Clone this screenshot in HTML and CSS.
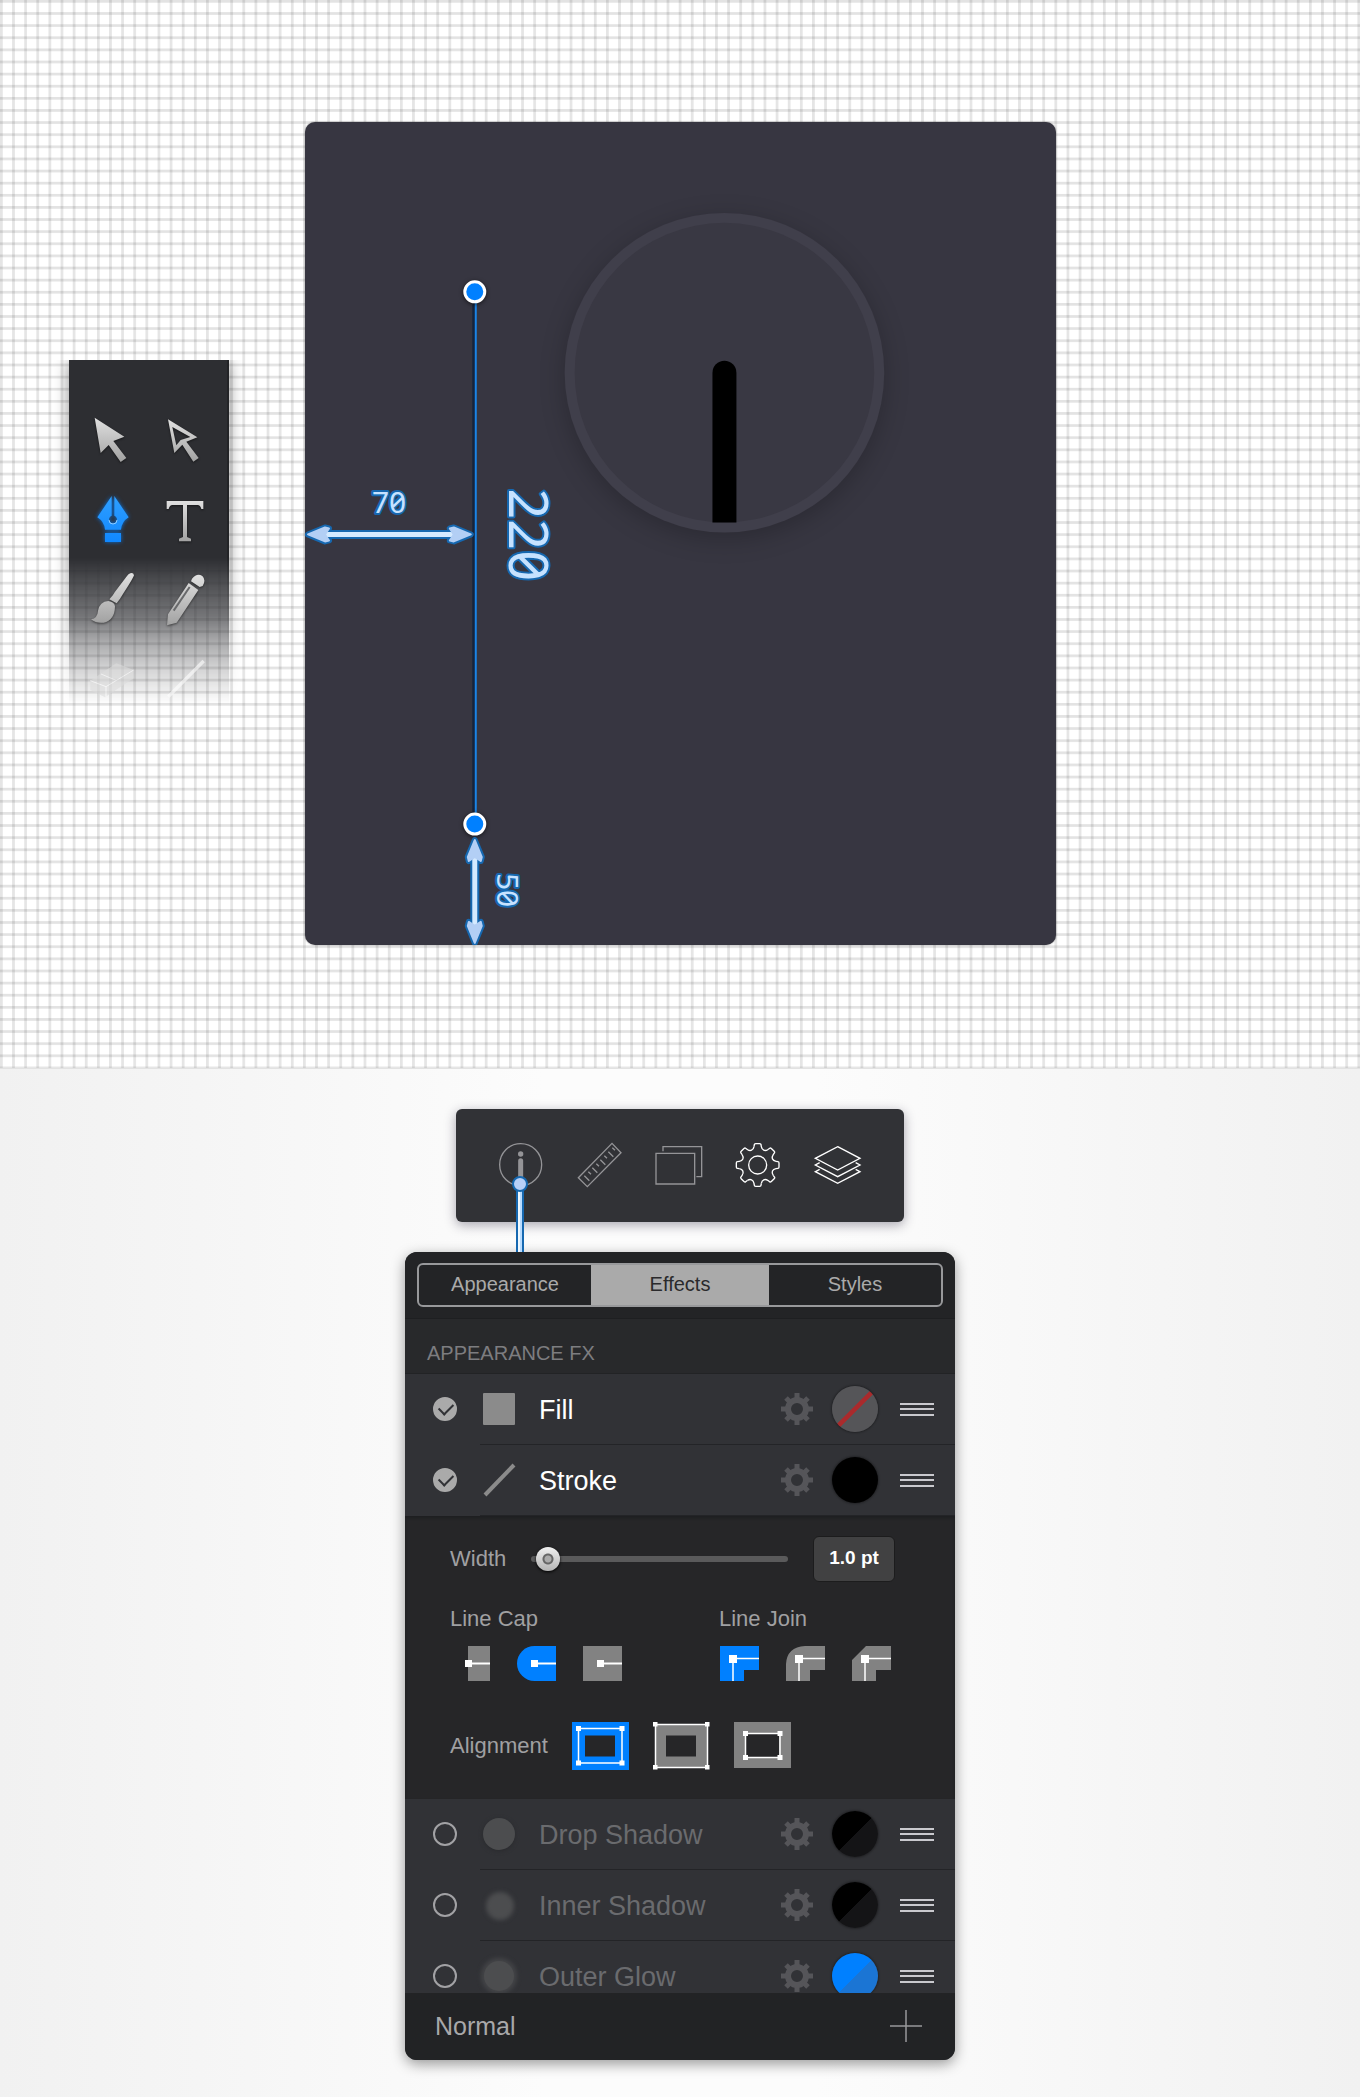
FILE: index.html
```
<!DOCTYPE html>
<html lang="en">
<head>
<meta charset="utf-8">
<meta name="viewport" content="width=device-width, initial-scale=1">
<title>Stroke effects</title>
<link rel="stylesheet" href="styles.css">
</head>
<body>
<svg class="defs" aria-hidden="true">
  <defs>
    <linearGradient id="metal" x1="0" y1="0" x2="0" y2="1"><stop offset="0" stop-color="#e0e0e0"/><stop offset="1" stop-color="#a2a2a2"/></linearGradient>
    <linearGradient id="azure" x1="0" y1="0" x2="0" y2="1"><stop offset="0" stop-color="#2f9fff"/><stop offset="1" stop-color="#1088ff"/></linearGradient>
    <symbol id="gear" viewBox="0 0 34 34">
      <g fill="none" stroke="currentColor"><circle cx="17" cy="17" r="9" stroke-width="6"/>
      <path stroke-width="5" d="M17 1v6M17 33v-6M1 17h6M33 17h-6M28 6l-5 5M6 6l5 5M28 28l-5-5M6 28l5-5"/></g>
    </symbol>
    <path id="tooth" d="M-11-55L-10-61Q-10-64-6-64H6Q10-64 10-61L11-55C13-44 21.900-40.300 31.100-46.700"/>
    <g id="arrowhead"><path d="M0 0L17-7L21-6L17 0L21 6L17 7Z"/></g>
  </defs>
</svg>

<section class="stage">
  <svg class="stage-grid" aria-hidden="true">
    <defs><pattern id="cells" width="12.12" height="12.12" patternUnits="userSpaceOnUse">
      <path d="M0 0h12.120v2.700H0z" fill="#000" fill-opacity=".11"/><path d="M0 0h2.700v12.120H0z" fill="#000" fill-opacity=".1"/>
    </pattern></defs>
    <rect width="100%" height="100%" fill="url(#cells)"/>
  </svg>

  <div class="toolbox" role="toolbar" aria-label="Tools">
    <button class="tool" aria-label="Move"><svg viewBox="75 180 219 240" fill="url(#metal)"><path d="M131 233L220 290L187 303L226 354L209 366L173 315L149 339Z"/></svg></button>
    <button class="tool" aria-label="Node"><svg viewBox="294 180 219 240" fill="url(#metal)"><path fill-rule="evenodd" d="M351 238L439 292L406 305L443 354L427 365L394 314L370 339ZM364 261L376 316L389 300L418 291Z"/></svg></button>
    <button class="tool tool-active" aria-label="Pen"><svg viewBox="75 420 219 240" fill="url(#azure)"><path d="M182 468V527A12 12 0 1 0 190 527V468L233 532Q212 545 210 569H162Q160 545 139 532ZM162 579H210V606H162Z"/><path d="M174 540A12 12 0 0 0 198 540" fill="none" stroke="#8ccbff" stroke-width="3"/></svg></button>
    <button class="tool" aria-label="Text"><svg viewBox="294 420 219 240" fill="url(#metal)"><path d="M347 483H457V507H451Q448 495 440 495H408V591L420 596V604H384V596L396 591V495H364Q356 495 353 507H347Z"/></svg></button>
    <button class="tool" aria-label="Brush"><svg viewBox="75 660 219 240" fill="url(#metal)"><path d="M238 700Q247 697 249 706Q248 713 207 776L197 790L175 778Q188 764 191 757L228 708Q232 702 238 700ZM172 783Q190 786 192 799Q191 842 158 848Q136 851 120 838Q140 834 141 812Q146 785 172 783Z"/></svg></button>
    <button class="tool" aria-label="Pencil"><svg viewBox="294 660 219 240" fill="url(#metal)"><path d="M423 716Q438 698 454 708Q466 720 455 738L446 741L420 724ZM413 729L442 750L377 848L348 856L351 823Z"/><path d="M416 741L368 812" stroke="#68696b" stroke-width="6"/></svg></button>
    <button class="tool tool-faded" aria-label="Eraser"><svg viewBox="75 900 219 240"><path d="M118 1022L196 970L248 990V1015L162 1072L118 1050Z" fill="#ddd"/><path d="M118 1022L165 1040L248 990M165 1040V1070M150 1002L195 1021" fill="none" stroke="#fff" stroke-width="3"/></svg></button>
    <button class="tool tool-faded" aria-label="Line"><svg viewBox="294 900 219 240"><path d="M458 963L352 1070" stroke="#fff" stroke-width="10"/></svg></button>
  </div>

  <div class="artboard">
    <svg class="drawing" viewBox="304 122 752 824" role="img" aria-label="Dial with a 220 point guide line">
      <g class="dial"><circle cx="724" cy="373" r="160" fill="#403f4b"/></g>
      <circle cx="724" cy="373" r="150" fill="#393843"/>
      <path d="M712 523V373a12 12 0 0 1 24 0V523Z" fill="#000"/>
      <path d="M473 292V825" stroke="#15243c" stroke-width="3"/>
      <path d="M475 292V825" stroke="#1b84e6" stroke-width="2"/>
      <g class="node"><circle cx="474" cy="292" r="10"/><circle cx="474" cy="825" r="10"/></g>
      <g class="arrow-edge"><path d="M322 535H455M474 857V928"/><use href="#arrowhead" x="307" y="535"/><use href="#arrowhead" transform="translate(470 535) rotate(180)"/><use href="#arrowhead" transform="translate(474 841) rotate(90)"/><use href="#arrowhead" transform="translate(474 944) rotate(270)"/></g>
      <path class="arrow-line" d="M322 535H455M474 857V928"/>
      <g class="arrow-fill"><use href="#arrowhead" x="307" y="535"/><use href="#arrowhead" transform="translate(470 535) rotate(180)"/><use href="#arrowhead" transform="translate(474 841) rotate(90)"/><use href="#arrowhead" transform="translate(474 944) rotate(270)"/></g>
      <text class="measure" x="371" y="514">70</text>
      <text class="measure measure-large" transform="translate(508 489) rotate(90)">220</text>
      <text class="measure" transform="translate(496 874) rotate(90)">50</text>
    </svg>
  </div>
</section>

<section class="inspector">
  <nav class="studio-bar" aria-label="Studios">
    <button class="studio" aria-label="Info"><svg viewBox="123 166 237 120" fill="none" stroke="#949497" stroke-width="4"><circle cx="242" cy="225" r="63"/><circle cx="242" cy="193" r="8" fill="#949497" stroke="none"/><path d="M242 213V270" stroke-width="15" stroke-linecap="round"/></svg></button>
    <button class="studio" aria-label="Transform"><svg viewBox="361 166 237 120" fill="none" stroke="#949497" stroke-width="4"><path d="M416 264L517 161L544 189L443 291ZM434 258L449 273M446 246L454 254M458 234L473 249M470 222L478 230M482 210L497 225M494 198L502 206M506 186L521 201M518 174L526 182"/></svg></button>
    <button class="studio" aria-label="Artboards"><svg viewBox="599 166 237 120" fill="none" stroke="#949497" stroke-width="4"><path d="M650 191H766V283H650ZM671 185V171H787V261H771"/></svg></button>
    <button class="studio" aria-label="Preferences"><svg viewBox="836 166 237 120" fill="none" stroke="#fff" stroke-width="4"><g transform="translate(955 226)"><circle r="27"/><use href="#tooth"/><use href="#tooth" transform="rotate(45)"/><use href="#tooth" transform="rotate(90)"/><use href="#tooth" transform="rotate(135)"/><use href="#tooth" transform="rotate(180)"/><use href="#tooth" transform="rotate(225)"/><use href="#tooth" transform="rotate(270)"/><use href="#tooth" transform="rotate(315)"/></g></svg></button>
    <button class="studio" aria-label="Layers"><svg viewBox="1071 166 237 120" fill="none" stroke="#fff" stroke-width="4"><path d="M1193 171L1260 206L1193 241L1126 206ZM1139 219L1126 226L1193 261L1260 226L1247 219M1139 239L1126 246L1193 281L1260 246L1247 239"/></svg></button>
    <svg class="callout" viewBox="0 0 20 76" aria-hidden="true"><path d="M10 8V76" stroke="#1668b0" stroke-width="8"/><path d="M10 8V76" stroke="#b9dcff" stroke-width="4"/><path d="M9 8V76" stroke="#eef8ff" stroke-width="2"/><circle cx="10" cy="8" r="7" fill="#b8d0f8" stroke="#1668b0" stroke-width="2"/></svg>
  </nav>

  <div class="panel">
    <div class="tabs-area">
      <div class="tabs" role="tablist">
        <button class="tab" role="tab" aria-selected="false">Appearance</button>
        <button class="tab" role="tab" aria-selected="true">Effects</button>
        <button class="tab" role="tab" aria-selected="false">Styles</button>
      </div>
    </div>
    <h2 class="heading">APPEARANCE FX</h2>

    <div class="row">
      <input class="check" type="checkbox" id="fx-fill" checked>
      <svg class="glyph" viewBox="0 0 32 32" aria-hidden="true"><rect width="32" height="32" rx="1" fill="#8b8b8b"/></svg>
      <label class="name" for="fx-fill">Fill</label>
      <button class="options" aria-label="Fill options"><svg viewBox="0 0 34 34"><use href="#gear"/></svg></button>
      <button class="swatch swatch-none" aria-label="Fill colour"></button>
      <button class="grip" aria-label="Reorder Fill"></button>
    </div>
    <div class="row">
      <input class="check" type="checkbox" id="fx-stroke" checked>
      <svg class="glyph" viewBox="0 0 32 32" aria-hidden="true"><path d="M2 31L31 1" stroke="#8b8b8b" stroke-width="4"/></svg>
      <label class="name" for="fx-stroke">Stroke</label>
      <button class="options" aria-label="Stroke options"><svg viewBox="0 0 34 34"><use href="#gear"/></svg></button>
      <button class="swatch swatch-black" aria-label="Stroke colour"></button>
      <button class="grip" aria-label="Reorder Stroke"></button>
    </div>

    <div class="settings">
      <div class="width-line">
        <label for="width">Width</label>
        <input class="slider" id="width" type="range" min="0" max="100" value="2">
        <input class="amount" type="text" value="1.0 pt" aria-label="Stroke width">
      </div>
      <div class="line-styles">
        <div role="radiogroup" aria-labelledby="cap-label">
          <div class="group-label" id="cap-label">Line Cap</div>
          <div class="choices">
            <label class="choice"><input type="radio" name="cap" aria-label="Butt cap"><svg viewBox="0 0 40 35"><path d="M17 0H39V35H17Z" fill="currentColor"/><path d="M18 17.500H39" stroke="#fff" stroke-width="2"/><path d="M14 14h7v7h-7z" fill="#fff"/></svg></label>
            <label class="choice"><input type="radio" name="cap" aria-label="Round cap" checked><svg viewBox="0 0 40 35"><path d="M17.500 0H39V35H17.500A17.500 17.500 0 0 1 17.500 0Z" fill="currentColor"/><path d="M18 17.500H39" stroke="#fff" stroke-width="2"/><path d="M14 14h7v7h-7z" fill="#fff"/></svg></label>
            <label class="choice"><input type="radio" name="cap" aria-label="Square cap"><svg viewBox="0 0 40 35"><path d="M0 0H39V35H0Z" fill="currentColor"/><path d="M18 17.500H39" stroke="#fff" stroke-width="2"/><path d="M14 14h7v7h-7z" fill="#fff"/></svg></label>
          </div>
        </div>
        <div role="radiogroup" aria-labelledby="join-label">
          <div class="group-label" id="join-label">Line Join</div>
          <div class="choices">
            <label class="choice"><input type="radio" name="join" aria-label="Mitre join" checked><svg viewBox="0 0 40 35"><path d="M0 0H39V24H24V35H0Z" fill="currentColor"/><path d="M39 12.500H13V35" fill="none" stroke="#fff" stroke-width="1.500"/><path d="M9 9h8v8h-8z" fill="#fff"/></svg></label>
            <label class="choice"><input type="radio" name="join" aria-label="Round join"><svg viewBox="0 0 40 35"><path d="M19 0H39V24H24V35H0V18Q1 1 19 0Z" fill="currentColor"/><path d="M39 12.500H13V35" fill="none" stroke="#fff" stroke-width="1.500"/><path d="M9 9h8v8h-8z" fill="#fff"/></svg></label>
            <label class="choice"><input type="radio" name="join" aria-label="Bevel join"><svg viewBox="0 0 40 35"><path d="M14 0H39V24H24V35H0V14Z" fill="currentColor"/><path d="M39 12.500H13V35" fill="none" stroke="#fff" stroke-width="1.500"/><path d="M9 9h8v8h-8z" fill="#fff"/></svg></label>
          </div>
        </div>
      </div>
      <div class="alignment" role="radiogroup" aria-labelledby="align-label">
        <div id="align-label">Alignment</div>
        <label class="choice choice-wide"><input type="radio" name="align" aria-label="Centre" checked><svg viewBox="0 0 57 48"><path d="M0 0H57V48H0ZM13 13.500V34.500H43V13.500Z" fill="currentColor" fill-rule="evenodd"/><path d="M6.500 6.500H50V41H6.500Z" fill="none" stroke="#fff" stroke-width="1.500"/><path d="M4 4h5v5h-5zM47.500 4h5v5h-5zM4 38.500h5v5h-5zM47.500 38.500h5v5h-5z" fill="#fff"/></svg></label>
        <label class="choice choice-wide"><input type="radio" name="align" aria-label="Inside"><svg viewBox="0 0 57 48"><path d="M2 2H55V46H2ZM13 13.500V34.500H43V13.500Z" fill="currentColor" fill-rule="evenodd"/><path d="M2.500 2.500H54.500V45.500H2.500Z" fill="none" stroke="#fff" stroke-width="1.500"/><path d="M0 0h4.500v4.500h-4.500zM52 0h4.500v4.500h-4.500zM0 43h4.500v4.500h-4.500zM52 43h4.500v4.500h-4.500z" fill="#fff"/></svg></label>
        <label class="choice choice-wide"><input type="radio" name="align" aria-label="Outside"><svg viewBox="0 0 57 48"><path d="M0 0H57V46H0ZM12 12V35H45V12Z" fill="currentColor" fill-rule="evenodd"/><path d="M11.500 11.500H46V35.500H11.500Z" fill="none" stroke="#fff" stroke-width="1.500"/><path d="M9 9h5v5h-5zM43.500 9h5v5h-5zM9 33h5v5h-5zM43.500 33h5v5h-5z" fill="#fff"/></svg></label>
      </div>
    </div>

    <div class="row row-off">
      <input class="check" type="checkbox" id="fx-drop">
      <svg class="glyph" viewBox="0 0 32 32" aria-hidden="true"><circle class="soft-edge" cx="16" cy="17" r="16" fill="#292a2d"/><circle cx="16" cy="16" r="16" fill="#4c4d4f"/></svg>
      <label class="name" for="fx-drop">Drop Shadow</label>
      <button class="options" aria-label="Drop Shadow options"><svg viewBox="0 0 34 34"><use href="#gear"/></svg></button>
      <button class="swatch swatch-split" aria-label="Drop Shadow colour"></button>
      <button class="grip" aria-label="Reorder Drop Shadow"></button>
    </div>
    <div class="row row-off">
      <input class="check" type="checkbox" id="fx-inner">
      <svg class="glyph" viewBox="0 0 32 32" aria-hidden="true"><circle class="soft-edge" cx="17" cy="17" r="14" fill="#4c4d4f"/></svg>
      <label class="name" for="fx-inner">Inner Shadow</label>
      <button class="options" aria-label="Inner Shadow options"><svg viewBox="0 0 34 34"><use href="#gear"/></svg></button>
      <button class="swatch swatch-split" aria-label="Inner Shadow colour"></button>
      <button class="grip" aria-label="Reorder Inner Shadow"></button>
    </div>
    <div class="row-clip">
      <div class="row row-off">
        <input class="check" type="checkbox" id="fx-outer">
        <svg class="glyph" viewBox="0 0 32 32" aria-hidden="true"><circle class="soft-edge" cx="16" cy="16" r="18" fill="#434447"/><circle cx="16" cy="16" r="15" fill="#4c4d4f"/></svg>
        <label class="name" for="fx-outer">Outer Glow</label>
        <button class="options" aria-label="Outer Glow options"><svg viewBox="0 0 34 34"><use href="#gear"/></svg></button>
        <button class="swatch swatch-blue" aria-label="Outer Glow colour"></button>
        <button class="grip" aria-label="Reorder Outer Glow"></button>
      </div>
    </div>

    <div class="panel-foot">
      <select class="blend" aria-label="Blend mode"><option>Normal</option></select>
      <button class="add" aria-label="Add effect"><svg viewBox="0 0 32 32"><path d="M16 0V32M0 16H32" stroke="#98989a" stroke-width="1.500"/></svg></button>
    </div>
  </div>
</section>
</body>
</html>
```
FILE: styles.css
```
* { box-sizing: border-box; }
body { margin: 0; font-family: "Liberation Sans", Arial, sans-serif; background: #f8f8f8; }
button { padding: 0; border: 0; background: none; color: inherit; font: inherit; cursor: pointer; }
svg { display: block; }
.defs { position: absolute; width: 0; height: 0; }

/* Canvas */
.stage {
  position: relative;
  display: grid;
  grid-template-columns: minmax(0, 1fr) minmax(0, 751px) minmax(0, 1fr);
  align-items: start;
  padding: 122px 0 123px;
  background: #fff;
  border-bottom: 1px solid #e2e2e2;
}
.stage-grid { position: absolute; inset: 0; width: 100%; height: 100%; }
.toolbox {
  position: relative;
  justify-self: end;
  display: grid;
  grid-template-columns: 73px 73px;
  margin: 238px 76px 0 0;
  padding: 40px 7px 0;
}
.toolbox::before {
  content: "";
  position: absolute;
  inset: 0;
  background: #2d2e32;
  box-shadow: 0 2px 14px rgba(0, 0, 0, .45), inset -2px 0 #232427;
  clip-path: inset(-20px -20px 0 -20px);
  mask-image: linear-gradient(#000 198px, rgba(0,0,0,.86) 220px, rgba(0,0,0,.66) 256px, rgba(0,0,0,.42) 280px, rgba(0,0,0,.2) 310px, transparent 345px);
  mask-clip: no-clip;
}
.tool { position: relative; width: 73px; height: 80px; }
.tool svg { width: 73px; height: 80px; filter: drop-shadow(0 1px 1px rgba(0, 0, 0, .5)); }
.tool-active svg { filter: drop-shadow(0 0 2px #0a6fd8); }
.tool-faded svg { opacity: .6; filter: none; }
.artboard {
  position: relative;
  border-radius: 10px;
  background: #373641;
  box-shadow: 0 0 2px rgba(0, 0, 0, .4);
}
.drawing { width: 100%; height: auto; }
.dial { filter: drop-shadow(0 6px 12px rgba(0, 0, 0, .22)); }
.node { fill: #0080ff; stroke: #fff; stroke-width: 3; filter: drop-shadow(0 1px 2px rgba(0, 0, 0, .6)); }
.arrow-edge { fill: #1668b0; stroke: #1668b0; stroke-width: 9; stroke-linejoin: round; }
.arrow-edge use { stroke-width: 6; }
.arrow-fill { fill: #b3cff5; stroke: #b3cff5; stroke-width: 2; stroke-linejoin: round; }
.arrow-line { stroke: #d4eaff; stroke-width: 5; }
.measure {
  font-family: "Noto Sans", sans-serif;
  font-size: 30px;
  font-feature-settings: "zero";
  fill: #c6e2ff;
  stroke: #1668b0;
  stroke-width: 4;
  stroke-linejoin: round;
  paint-order: stroke;
}
.measure-large { font-size: 54px; }

/* Lower area */
.inspector {
  display: flex;
  flex-direction: column;
  align-items: center;
  gap: 30px;
  padding: 40px 16px 37px;
  background: linear-gradient(90deg, #f1f1f1, #fcfcfc 40%, #fcfcfc 60%, #f1f1f1);
}
.studio-bar {
  position: relative;
  display: flex;
  align-items: center;
  width: 448px;
  height: 113px;
  padding-left: 25px;
  border-radius: 6px;
  background: #313236;
  box-shadow: 0 3px 12px rgba(40, 35, 60, .4);
}
.studio { width: 79px; height: 40px; }
.studio svg { width: 79px; height: 40px; overflow: visible; }
.callout { position: absolute; left: 54px; top: 67px; width: 20px; height: 76px; }

/* Effects panel */
.panel {
  width: 100%;
  max-width: 550px;
  overflow: hidden;
  border-radius: 12px;
  background: #313236;
  box-shadow: 0 4px 14px rgba(0, 0, 0, .4);
}
.tabs-area { padding: 11px 12px; background: #232426; border-bottom: 1px solid #1e1f21; }
.tabs {
  display: grid;
  grid-template-columns: 1fr 178px 1fr;
  height: 44px;
  border: 2px solid #98999b;
  border-radius: 6px;
  overflow: hidden;
}
.tab { padding-bottom: 2px; color: #aaa; font-size: 20px; line-height: 36px; }
.tab[aria-selected="true"] { background: #aaa; color: #2a2a2c; }
.heading {
  margin: 0;
  height: 55px;
  padding: 22px 22px 0;
  border-bottom: 1px solid #222325;
  background: #28292b;
  color: #7d7d80;
  font-size: 20px;
  font-weight: 400;
  line-height: 24px;
}
.row {
  display: flex;
  align-items: center;
  height: 71px;
  padding: 0 21px 0 28px;
  background: linear-gradient(#232427, #232427) 75px 100% / 100% 1px no-repeat #313236;
}
.check {
  appearance: none;
  width: 24px;
  height: 24px;
  margin: 0;
  border: 2px solid #a2a2a5;
  border-radius: 50%;
}
.check:checked { position: relative; background: #aaa; border-color: #aaa; }
.check:checked::after {
  content: "";
  position: absolute;
  left: 4px;
  top: 4px;
  width: 12px;
  height: 7px;
  border: solid #313236;
  border-width: 0 0 2px 2px;
  transform: rotate(-45deg);
}
.glyph { width: 32px; height: 32px; margin: 0 24px 0 26px; overflow: visible; }
.soft-edge { filter: blur(2px); }
.name { flex: 1; padding-top: 2px; color: #fff; font-size: 27px; line-height: 32px; }
.row-off .name { color: #6a6b6e; }
.options { width: 34px; height: 34px; margin-right: 18px; color: #555559; }
.swatch {
  width: 46px;
  height: 46px;
  margin-right: 22px;
  border-radius: 50%;
  box-shadow: 0 0 2px 1px rgba(0, 0, 0, .3);
}
.swatch-none { background: linear-gradient(135deg, #555558 46%, #aa2a2c 47%, #aa2a2c 53%, #555558 54%); }
.swatch-black { background: #000; }
.swatch-split { background: linear-gradient(135deg, #000 50%, #141416 51%); }
.swatch-blue { background: linear-gradient(135deg, #0080ff 50%, #1b75d4 51%); }
.grip {
  width: 34px;
  height: 13px;
  background: linear-gradient(#c9c9ce 2px, transparent 2px 5px, #c9c9ce 5px 7px, transparent 7px 11px, #c9c9ce 11px);
}
.row-clip { height: 52px; overflow: hidden; }

.settings {
  padding: 20px 60px 29px 45px;
  background: #262628;
  box-shadow: inset 0 2px 3px #1e1f21;
  color: #a0a0a2;
  font-size: 22px;
  line-height: 26px;
}
.width-line { display: flex; align-items: center; gap: 25px; }
.slider { appearance: none; flex: 1; min-width: 0; height: 24px; margin: 0; background: none; }
.slider::-webkit-slider-runnable-track { height: 6px; border-radius: 3px; background: #5a5a5b; }
.slider::-webkit-slider-thumb {
  appearance: none;
  width: 24px;
  height: 24px;
  margin-top: -9px;
  border-radius: 50%;
  background: radial-gradient(circle, #aaa 3px, #666 4px 5px, transparent 6px), linear-gradient(#f0f0f0, #b4b4b4);
  box-shadow: 0 1px 3px #000;
}
.amount {
  width: 82px;
  height: 46px;
  padding: 0 0 2px;
  border: 1px solid #1c1c1d;
  border-radius: 6px;
  background: #414142;
  color: #fff;
  font: 700 19px "Liberation Sans", Arial, sans-serif;
  text-align: center;
}
.line-styles { display: grid; grid-template-columns: 269px 1fr; margin: 24px -20px 41px 0; }
.choices { display: flex; gap: 26px; padding: 14px 0 0 1px; }
.choice { position: relative; display: block; width: 40px; height: 35px; color: #828282; }
.choice input { position: absolute; opacity: 0; margin: 0; }
.choice:has(:checked) { color: #0080ff; }
.choice-wide { width: 57px; height: 48px; }
.alignment { display: flex; align-items: center; gap: 24px; }

.panel-foot {
  display: flex;
  align-items: center;
  justify-content: space-between;
  height: 67px;
  padding: 0 33px 0 30px;
  background: #222325;
}
.blend { appearance: none; padding: 0; border: 0; background: none; color: #a8a8aa; font: 25px "Liberation Sans", Arial, sans-serif; }
.add { width: 32px; height: 32px; }
```
